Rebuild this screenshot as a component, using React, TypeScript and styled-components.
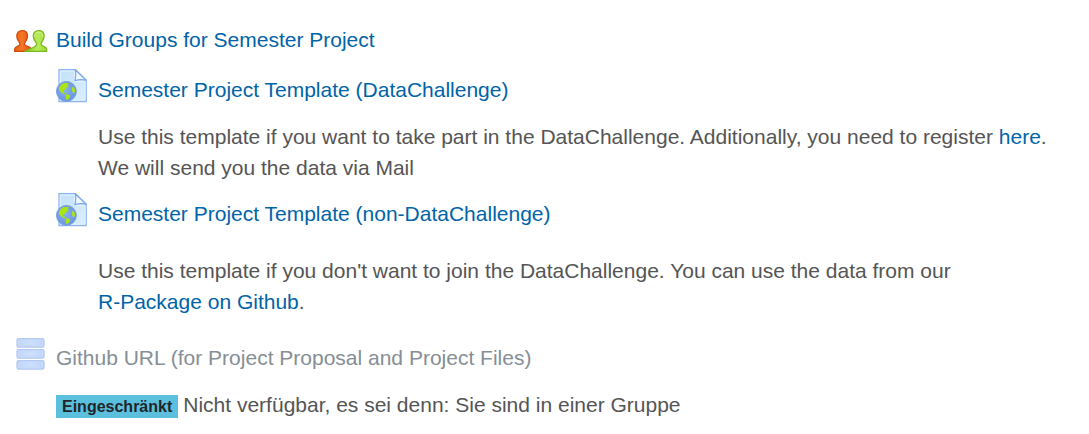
import React from 'react';
import styled, { createGlobalStyle } from 'styled-components';

const GlobalStyle = createGlobalStyle`
  body {
    margin: 0;
    background: #fff;
    color: #555;
    font: 21px/31px "Liberation Sans", Arial, sans-serif;
  }
`;

const ActivityList = styled.ul`
  list-style: none;
  margin: 0;
  padding: 19px 14px 12px;
`;

const Activity = styled.li<{ $indent?: boolean; $gap?: number }>`
  margin-top: ${p => p.$gap ?? 0}px;
  padding-left: ${p => (p.$indent ? 42 : 0)}px;
`;

const Header = styled.div`
  display: flex;
  gap: 8px;
  height: 36px;

  svg {
    flex: none;
    width: 34px;
    height: 34px;
  }
`;

const Title = styled.span<{ $dimmed?: boolean }>`
  padding-top: 5px;
  color: ${p => (p.$dimmed ? '#868e96' : 'inherit')};
`;

const Link = styled.a`
  color: #0064a8;
  text-decoration: none;

  &:hover {
    text-decoration: underline;
  }
`;

const UnbrokenLink = styled(Link)`
  white-space: nowrap;
`;

const Description = styled.p<{ $gap: number }>`
  margin: ${p => p.$gap}px 0 0 42px;
`;

const Availability = styled.div`
  display: flex;
  flex-wrap: wrap;
  align-items: center;
  column-gap: 5px;
  margin: 16px 0 0 42px;
`;

const Badge = styled.span`
  margin-top: 4px;
  padding: 0 6px;
  background: #5bc0de;
  color: #212529;
  font-size: 16px;
  font-weight: bold;
  line-height: 23px;
`;

function GroupsIcon() {
  return (
    <svg viewBox="0 0 34 34" aria-hidden="true">
      <defs>
        <linearGradient id="person-orange">
          <stop offset="0" stopColor="#e9600f" />
          <stop offset=".45" stopColor="#f4772a" />
          <stop offset="1" stopColor="#e65208" />
        </linearGradient>
        <linearGradient id="person-green">
          <stop offset="0" stopColor="#8fce20" />
          <stop offset=".6" stopColor="#b9ea58" />
          <stop offset="1" stopColor="#9bd92f" />
        </linearGradient>
      </defs>
      <path
        d="M.7 32.4V30C.7 27.5 5.2 27.4 5.9 25.4C6.3 24.2 5.4 23.2 4.4 21.8C3.3 20.2 2.8 18.9 2.8 17C2.8 13.6 5 11.7 8.2 11.7C11.4 11.7 13.5 13.6 13.5 17C13.5 18.9 13 20.2 11.9 21.8C10.9 23.2 10.1 24.2 10.5 25.4C11.2 27.4 17 27.4 17 30V32.4Z"
        fill="url(#person-orange)"
        stroke="#cf4b0b"
        strokeWidth="1.3"
      />
      <path
        d="M11.5 32.4C14 30.3 16.5 30 18.5 28.8C20.5 27.8 22.5 27 22.7 25.4C22.9 24.2 21.9 23.2 20.9 21.8C19.8 20.2 19.3 18.9 19.3 17C19.3 13.6 21.5 11.7 24.8 11.7C28 11.7 30.1 13.6 30.1 17C30.1 18.9 29.6 20.2 28.5 21.8C27.5 23.2 26.7 24.2 27.1 25.4C27.8 27.4 32.6 27.4 32.6 30V32.4Z"
        fill="url(#person-green)"
        stroke="#79b822"
        strokeWidth="1.3"
      />
      <path
        d="M20.8 18C20.4 14.8 22 13.2 24.8 13.2C27.4 13.2 28.9 14.8 28.6 17.8"
        fill="none"
        stroke="#d3f39a"
        strokeWidth="1"
      />
    </svg>
  );
}

function WebPageIcon() {
  return (
    <svg viewBox="0 0 34 34" aria-hidden="true">
      <defs>
        <linearGradient id="sheet" x1="0" y1="0" x2="1" y2="1">
          <stop offset="0" stopColor="#c3e1f8" />
          <stop offset="1" stopColor="#d9effd" />
        </linearGradient>
        <radialGradient id="ocean" cx=".45" cy=".45" r=".6">
          <stop offset="0" stopColor="#85b0f0" />
          <stop offset="1" stopColor="#6a93dd" />
        </radialGradient>
      </defs>
      <path d="M3 .7H19.5L30.2 11.2V32.5H3Z" fill="url(#sheet)" stroke="#8db5f3" strokeWidth="1.3" />
      <path d="M4.3 2H18.5V12.5H29V31.2H4.3Z" fill="none" stroke="#e3f3fe" strokeWidth="1" />
      <path d="M19.2 .7C20 4.2 20 7.5 18.9 11.6C22.5 10.4 26.5 10.2 30.2 11.2Z" fill="#eff8ff" stroke="#7ea8ee" strokeWidth="1.2" strokeLinejoin="round" />
      <circle cx="10.4" cy="22.4" r="9.9" fill="url(#ocean)" stroke="#759bdd" strokeWidth="1" />
      <path
        d="M2.8 19.5C3.6 16.3 6.5 14 10.2 13.7L13 14.6L11.5 15.8L12.8 17.2L10.6 18.8L9.6 20.8L7.4 21.4L7 22.8L9.4 24.2L8.8 25.2L5.6 23.8L3.4 21.6Z M9.4 25.4L12 25.2L14.4 26.8L13.6 28.8L11.2 31L9.8 30.6L10 28Z M16.8 17.2L18.6 19.6L19.2 22.4L18 24.6L16.4 23L15.8 20Z"
        fill="#abe414"
      />
    </svg>
  );
}

function DatabaseIcon() {
  return (
    <svg viewBox="0 0 34 34" aria-hidden="true">
      <defs>
        <radialGradient id="drawer" cx=".5" cy=".5" r=".6">
          <stop offset="0" stopColor="#cde2fc" />
          <stop offset="1" stopColor="#bcd2f8" />
        </radialGradient>
      </defs>
      {[1.6, 12.6, 23.6].map(y => (
        <g key={y}>
          <rect x="3" y={y} width="27" height="8.6" rx="1.6" fill="url(#drawer)" stroke="#b4c9f3" strokeWidth="1.3" />
          <rect x="4.5" y={y + 1.4} width="24" height="5.8" rx="1" fill="none" stroke="#d1e0fa" strokeWidth=".7" />
        </g>
      ))}
    </svg>
  );
}

export default function App() {
  return (
    <>
      <GlobalStyle />
      <ActivityList>
        <Activity>
          <Header>
            <GroupsIcon />
            <Title><Link href="#groups">Build Groups for Semester Project</Link></Title>
          </Header>
        </Activity>
        <Activity $indent $gap={14}>
          <Header>
            <WebPageIcon />
            <Title><Link href="#template-datachallenge">Semester Project Template (DataChallenge)</Link></Title>
          </Header>
          <Description $gap={16}>
            Use this template if you want to take part in the DataChallenge. Additionally, you need to register{' '}
            <Link href="#register">here</Link>. We will send you the data via Mail
          </Description>
        </Activity>
        <Activity $indent $gap={10}>
          <Header>
            <WebPageIcon />
            <Title><Link href="#template">Semester Project Template (non-DataChallenge)</Link></Title>
          </Header>
          <Description $gap={26}>
            Use this template if you don't want to join the DataChallenge. You can use the data from our{' '}
            <UnbrokenLink href="#r-package">R-Package on Github</UnbrokenLink>.
          </Description>
        </Activity>
        <Activity $gap={20}>
          <Header>
            <DatabaseIcon />
            <Title $dimmed>Github URL (for Project Proposal and Project Files)</Title>
          </Header>
          <Availability>
            <Badge>Eingeschränkt</Badge>
            <span>Nicht verfügbar, es sei denn: Sie sind in einer Gruppe</span>
          </Availability>
        </Activity>
      </ActivityList>
    </>
  );
}
